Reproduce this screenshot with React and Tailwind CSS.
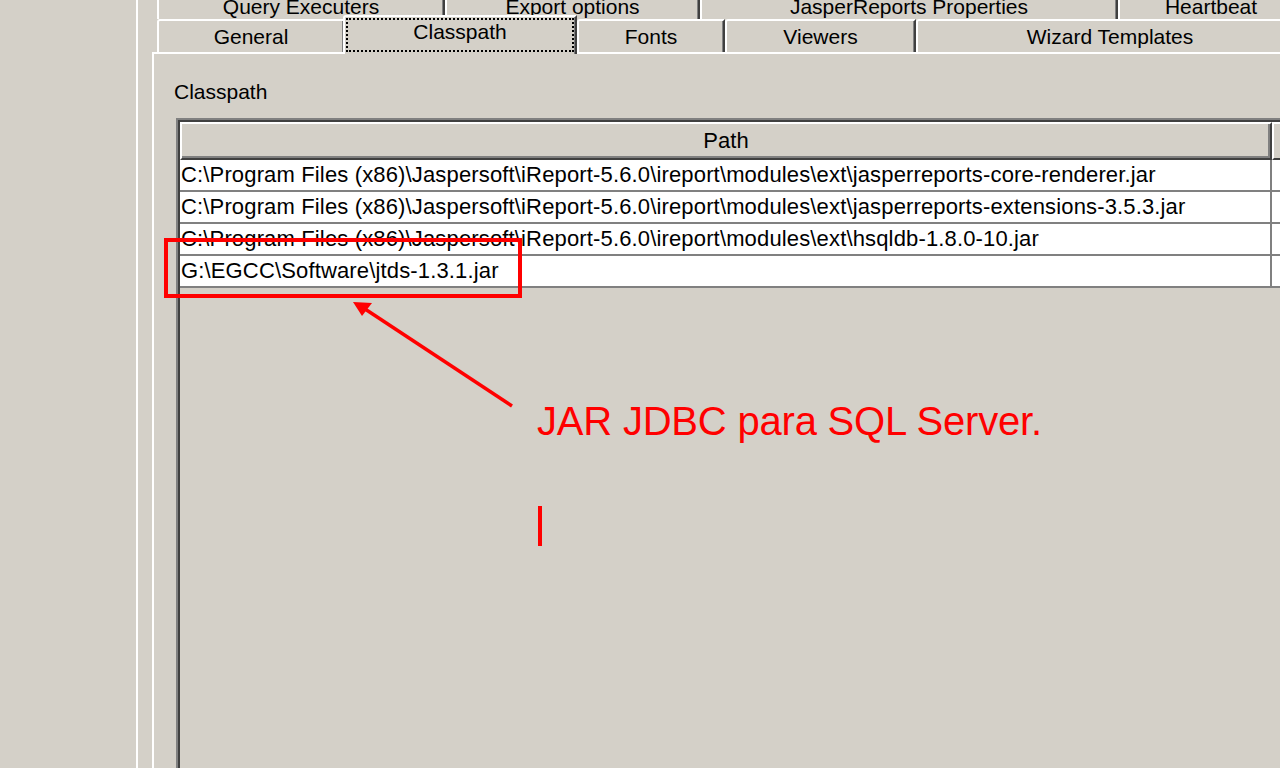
export default function App() {
  const rows = [
    "C:\\Program Files (x86)\\Jaspersoft\\iReport-5.6.0\\ireport\\modules\\ext\\jasperreports-core-renderer.jar",
    "C:\\Program Files (x86)\\Jaspersoft\\iReport-5.6.0\\ireport\\modules\\ext\\jasperreports-extensions-3.5.3.jar",
    "C:\\Program Files (x86)\\Jaspersoft\\iReport-5.6.0\\ireport\\modules\\ext\\hsqldb-1.8.0-10.jar",
    "G:\\EGCC\\Software\\jtds-1.3.1.jar",
  ];

  const row1 = [
    { label: "Query Executers", w: "w-[288px]" },
    { label: "Export options", w: "w-[255px]" },
    { label: "JasperReports Properties", w: "w-[418px]" },
    { label: "Heartbeat", w: "w-[186px]" },
  ];

  return (
    <div className="relative w-[1280px] h-[768px] overflow-hidden bg-[#d4d0c8] flex text-black font-['Liberation_Sans',Arial,sans-serif]">
      {/* left area */}
      <div className="w-[138px] shrink-0 border-r-2 border-white" />

      {/* main column */}
      <div className="flex-1 min-w-0 flex flex-col pl-[14px]">
        {/* tab row 1 (back row) */}
        <div className="flex h-[19px] overflow-hidden ml-[5px] shrink-0">
          {row1.map((t) => (
            <div
              key={t.label}
              className={`${t.w} shrink-0 h-full border-l-2 border-r-2 border-l-white border-r-[#404040] shadow-[inset_-1px_0_0_#808080] flex justify-center items-start`}
            >
              <span className="text-[21px] leading-[22px] -mt-[4px] whitespace-nowrap">{t.label}</span>
            </div>
          ))}
        </div>

        {/* tab row 2 (front row) */}
        <div className="flex h-[37px] items-end -mt-[4px] ml-[5px] relative z-10 shrink-0">
          <div className="w-[188px] shrink-0 h-[33px] border-l-2 border-t-2 border-r-2 border-l-white border-t-white border-r-[#404040] shadow-[inset_-1px_0_0_#808080] rounded-tl-[3px] flex items-center justify-center">
            <span className="text-[21px] leading-[22px] whitespace-nowrap">General</span>
          </div>
          <div className="w-[234px] shrink-0 h-[39px] -mb-[2px] -ml-[2px] bg-[#d4d0c8] border-l-2 border-t-2 border-r-2 border-l-white border-t-white border-r-[#404040] shadow-[inset_-1px_0_0_#808080] rounded-tl-[3px] flex pt-[1px] pl-[1px] pr-[1px] pb-[2px]">
            <div className="flex-1 border-2 border-dotted border-black flex items-center justify-center pb-[7px]">
              <span className="text-[21px] leading-[22px] whitespace-nowrap">Classpath</span>
            </div>
          </div>
          <div className="w-[148px] shrink-0 h-[33px] border-l-2 border-t-2 border-r-2 border-l-white border-t-white border-r-[#404040] shadow-[inset_-1px_0_0_#808080] rounded-tl-[3px] flex items-center justify-center">
            <span className="text-[21px] leading-[22px] whitespace-nowrap">Fonts</span>
          </div>
          <div className="w-[191px] shrink-0 h-[33px] border-l-2 border-t-2 border-r-2 border-l-white border-t-white border-r-[#404040] shadow-[inset_-1px_0_0_#808080] rounded-tl-[3px] flex items-center justify-center">
            <span className="text-[21px] leading-[22px] whitespace-nowrap">Viewers</span>
          </div>
          <div className="w-[386px] shrink-0 h-[33px] border-l-2 border-t-2 border-l-white border-t-white rounded-tl-[3px] flex items-center justify-center">
            <span className="text-[21px] leading-[22px] whitespace-nowrap">Wizard Templates</span>
          </div>
        </div>

        {/* tab panel */}
        <div className="flex-1 min-h-0 border-l-2 border-t-2 border-white flex flex-col">
          <div className="ml-[20px] mt-[27px] text-[21px] leading-[22px] shrink-0">Classpath</div>

          {/* table scroll pane */}
          <div className="ml-[22px] mt-[15px] flex-1 min-h-0 border-l-2 border-t-2 border-[#808080]">
            <div className="h-full border-l-2 border-t-2 border-[#404040] bg-[#d4d0c8] flex flex-col">
              {/* header */}
              <div className="flex h-[38px] shrink-0">
                <div className="w-[1092px] shrink-0 border-l-2 border-t-2 border-r-2 border-b-2 border-l-white border-t-white border-r-[#404040] border-b-[#404040] shadow-[inset_-2px_-2px_0_#808080] flex items-center justify-center">
                  <span className="text-[22px] leading-[22px]">Path</span>
                </div>
                <div className="flex-1 border-l-2 border-t-2 border-b-2 border-l-white border-t-white border-b-[#404040]" />
              </div>
              {/* rows */}
              {rows.map((r) => (
                <div key={r} className="flex h-[32px] shrink-0">
                  <div className="w-[1092px] shrink-0 bg-white border-r-2 border-b-2 border-[#808080] pl-[1px] flex items-center overflow-hidden whitespace-nowrap">
                    <span className="text-[22px] leading-[22px] tracking-[0.15px]">{r}</span>
                  </div>
                  <div className="flex-1 bg-white border-b-2 border-[#808080]" />
                </div>
              ))}
            </div>
          </div>
        </div>
      </div>

      {/* red annotations (overlay) */}
      <div className="absolute left-[164px] top-[238px] w-[358px] h-[60px] border-4 border-[#ff0000] pointer-events-none" />
      <svg className="absolute left-0 top-0 pointer-events-none" width="1280" height="768" viewBox="0 0 1280 768">
        <line x1="512" y1="406" x2="362" y2="307" stroke="#ff0000" strokeWidth="3.5" />
        <polygon points="353,302 372,303 362,316" fill="#ff0000" />
      </svg>
      <div className="absolute left-[537px] top-[401px] text-[40px] leading-[40px] text-[#ff0000] whitespace-nowrap tracking-[-0.2px] pointer-events-none">
        JAR JDBC para SQL Server.
      </div>
      <div className="absolute left-[538px] top-[506px] w-[4px] h-[40px] bg-[#ff0000] pointer-events-none" />
    </div>
  );
}
